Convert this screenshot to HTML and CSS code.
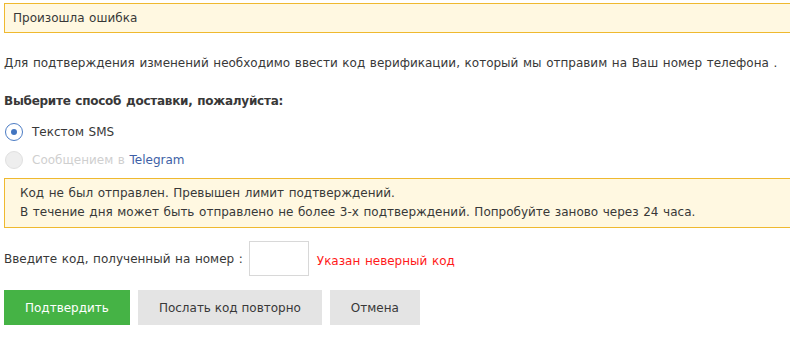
FILE: index.html
```html
<!DOCTYPE html>
<html lang="ru">
<head>
    <meta charset="UTF-8">
    <meta name="viewport" content="width=device-width, initial-scale=1.0">
    <title>Подтверждение</title>
    <link rel="stylesheet" href="styles.css">
</head>
<body>
    <div class="aviso aviso-top">Произошла ошибка</div>

    <p class="texto">Для подтверждения изменений необходимо ввести код верификации, который мы отправим на Ваш номер телефона .</p>

    <div class="subtitulo">Выберите способ доставки, пожалуйста:</div>

    <label class="opcion">
        <span class="radio activo"></span>
        <span>Текстом SMS</span>
    </label>
    <label class="opcion desactivada">
        <span class="radio"></span>
        <span>Сообщением в <span class="marca">Telegram</span></span>
    </label>

    <div class="aviso aviso-limite">
        Код не был отправлен. Превышен лимит подтверждений.<br>
        В течение дня может быть отправлено не более 3-х подтверждений. Попробуйте заново через 24 часа.
    </div>

    <div class="fila-codigo">
        <span>Введите код, полученный на номер :</span>
        <input type="text" class="campo">
        <span class="error">Указан неверный код</span>
    </div>

    <div class="botones">
        <button class="boton verde">Подтвердить</button>
        <button class="boton gris">Послать код повторно</button>
        <button class="boton gris">Отмена</button>
    </div>
</body>
</html>
```

FILE: styles.css
```css
body {
    font-family: 'DejaVu Sans', sans-serif;
    font-size: 12px;
    word-spacing: 0.8px;
    color: #383838;
    margin: 0;
    padding: 3px 0 0 4px;
    overflow: hidden;
    background-color: white;
}
.aviso {
    background-color: #fff8e1;
    border: 1px solid #efb92f;
    margin-right: -20px;
    padding: 0 8px;
}
.aviso-top {
    height: 28px;
    line-height: 28px;
}
.texto {
    margin: 21px 0 0 0;
    line-height: 18px;
}
.subtitulo {
    font-weight: bold;
    letter-spacing: -0.25px;
    margin-top: 20px;
    line-height: 18px;
}
.opcion {
    display: flex;
    align-items: center;
    gap: 9px;
    height: 18px;
    margin-top: 13px;
}
.opcion + .opcion {
    margin-top: 10px;
}
.radio {
    width: 16px;
    height: 16px;
    border: 1px solid #b9b9b9;
    border-radius: 50%;
    display: flex;
    align-items: center;
    justify-content: center;
    margin-left: 1px;
}
.radio.activo {
    border-color: #4c7cc4;
}
.radio.activo::after {
    content: "";
    width: 6px;
    height: 6px;
    border-radius: 50%;
    background-color: #4275c0;
}
.desactivada {
    color: #cfcfcf;
}
.desactivada .radio {
    border-color: #e0e0e0;
    background-color: #eeeeee;
}
.marca {
    color: #3e5fa6;
}
.aviso-limite {
    margin-top: 9px;
    padding: 5px 15px;
    line-height: 19px;
}
.fila-codigo {
    display: flex;
    align-items: center;
    margin-top: 13px;
}
.fila-codigo span:first-child {
    margin-top: 1px;
}
.campo {
    width: 60px;
    height: 35px;
    box-sizing: border-box;
    border: 1px solid #d8d8d8;
    margin: 0 8px 0 6px;
    padding: 0;
}
.error {
    color: #ff1a1a;
    margin-top: 4px;
}
.botones {
    display: flex;
    gap: 8px;
    margin-top: 14px;
}
.boton {
    font-family: inherit;
    font-size: 12px;
    word-spacing: normal;
    border: none;
    height: 35px;
    padding: 0 21px;
}
.verde {
    background-color: #45b345;
    color: white;
}
.gris {
    background-color: #e4e4e4;
    color: #383838;
}
```
